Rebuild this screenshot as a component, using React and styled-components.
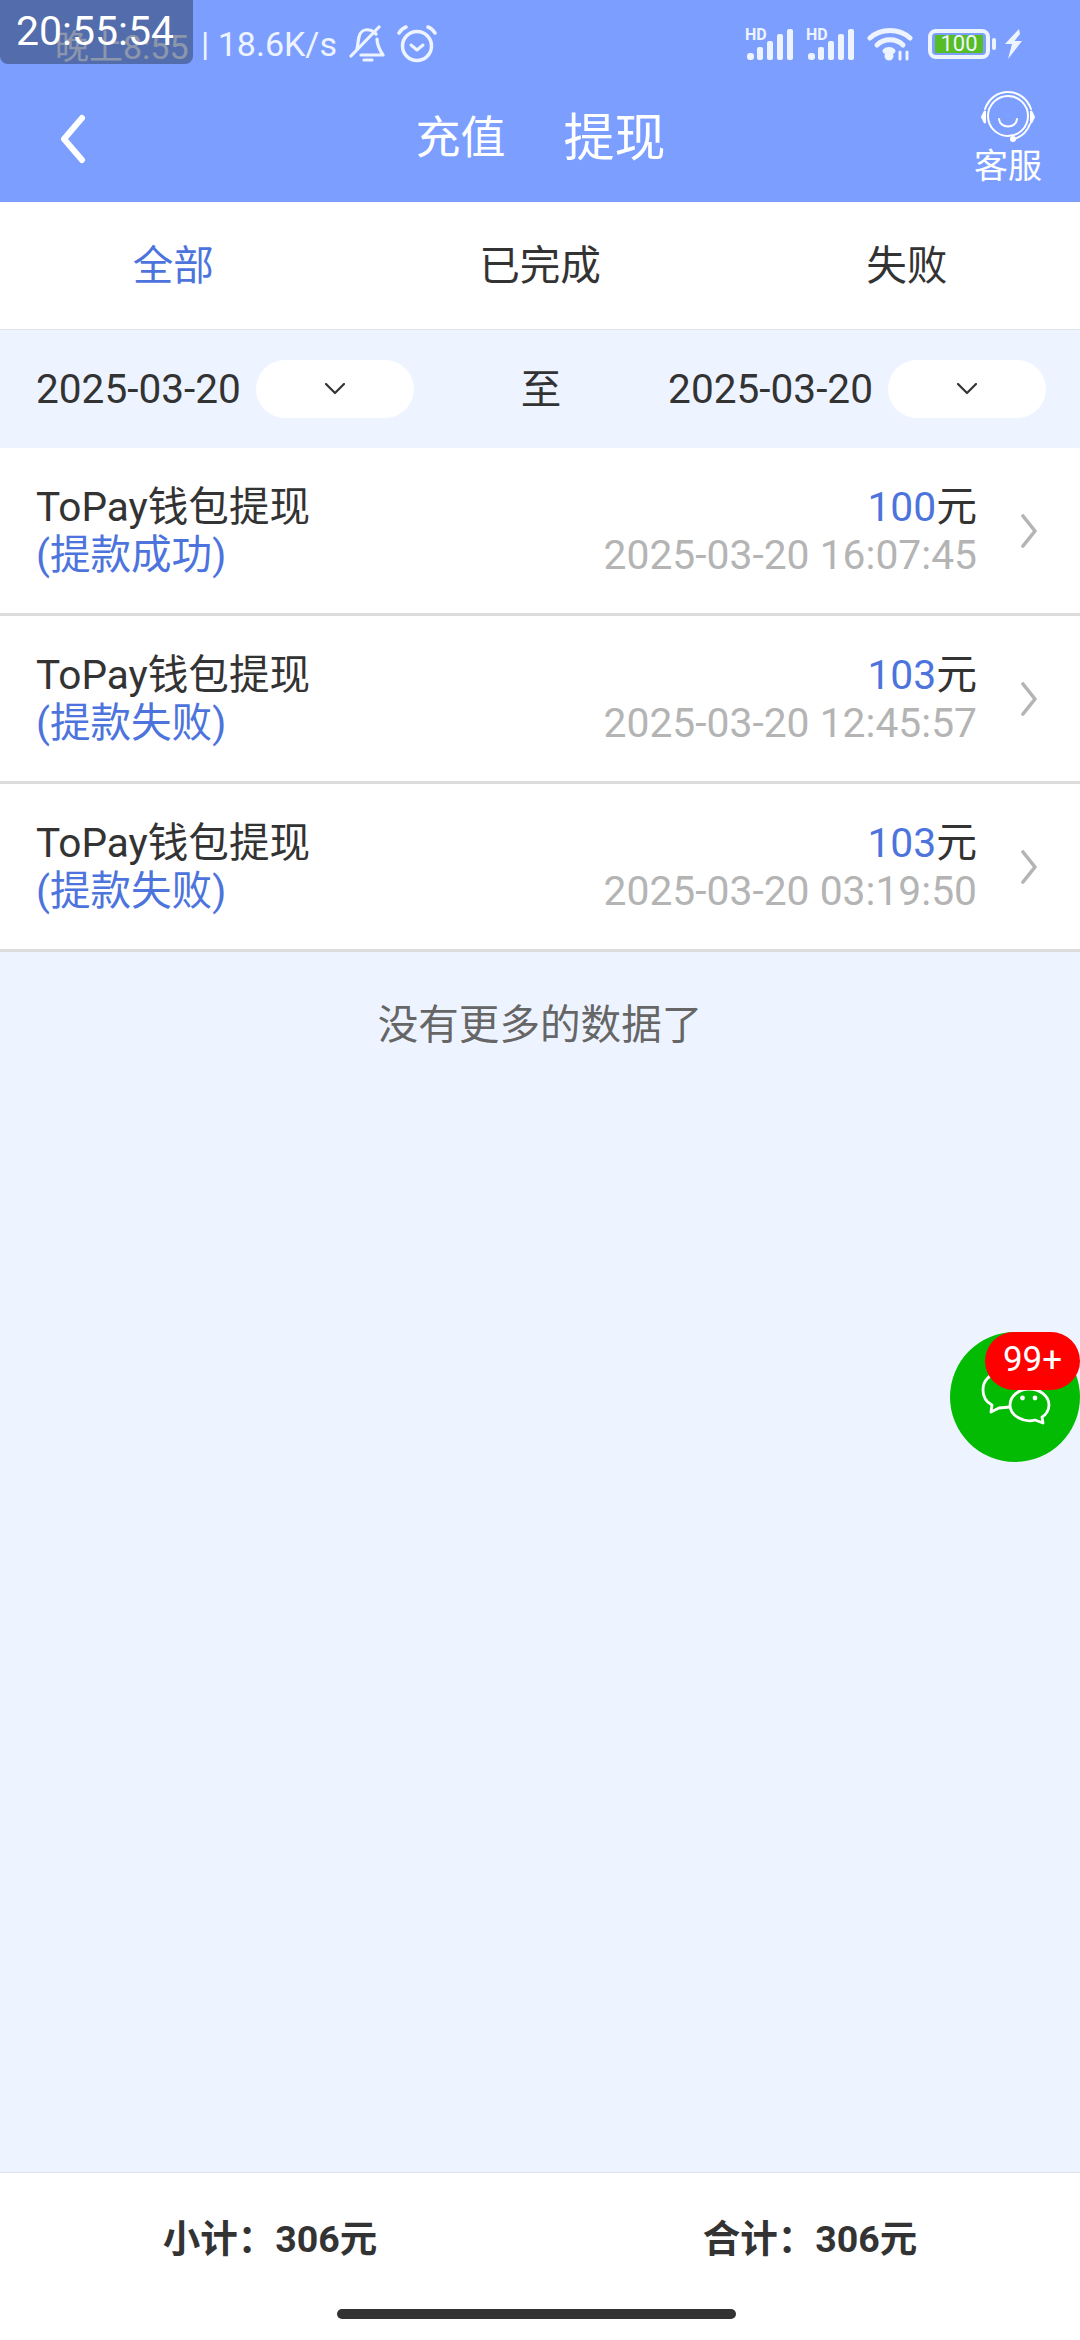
import React from "react";
import styled, { createGlobalStyle } from "styled-components";

const records = [
	{ amount: 100, status: "(提款成功)", time: "2025-03-20 16:07:45" },
	{ amount: 103, status: "(提款失败)", time: "2025-03-20 12:45:57" },
	{ amount: 103, status: "(提款失败)", time: "2025-03-20 03:19:50" },
];

const HdSignal = () => (
	<svg width="50" height="32" viewBox="0 0 50 32" fill="#eef4ff" overflow="visible">
		<text x="0" y="12" fontFamily="Roboto, sans-serif" fontWeight="700" fontSize="16">HD</text>
		<rect x="2" y="25" width="7" height="7" rx="3" />
		<rect x="12" y="19" width="6" height="13" rx="2" />
		<rect x="22" y="13" width="6" height="19" rx="2" />
		<rect x="32" y="6" width="6" height="26" rx="2" />
		<rect x="42" y="1" width="6" height="31" rx="2" />
	</svg>
);

const Wifi = () => (
	<svg width="46" height="34" viewBox="0 0 46 34" fill="none" stroke="#eef4ff" strokeWidth="5" strokeLinecap="round">
		<path d="M3 11C14 1 32 1 43 11" />
		<path d="M10 18C17 11 29 11 36 18" />
		<path d="M18 24C20 22 24 22 26 24" />
		<circle cx="22" cy="29" r="2" fill="#eef4ff" />
		<path d="M33 25V32M40 25V32" strokeWidth="3" />
	</svg>
);

const Bolt = () => (
	<svg width="17" height="30" viewBox="0 0 17 30" fill="#eef4ff">
		<path d="M14 0L0 15H7L3 30L17 12H9.500L15 5Z" />
	</svg>
);

const BellOff = () => (
	<svg width="36" height="38" viewBox="0 0 36 38" fill="none" stroke="#eef4ff" strokeWidth="3.2" strokeLinecap="round" strokeLinejoin="round">
		<path d="M8 24C9 20 9 16 10 12C11 7 15 4 20 5C23 5 25 7 27 9" />
		<path d="M28 14C28 19 30 24 34 30H12" />
		<path d="M2 31L30 2" />
		<path d="M15 35H23" />
	</svg>
);

const Alarm = () => (
	<svg width="40" height="38" viewBox="0 0 40 38" fill="none" stroke="#eef4ff" strokeWidth="3.5" strokeLinecap="round" strokeLinejoin="round">
		<circle cx="20" cy="21" r="14.5" />
		<path d="M14 20L20 25L26 20" strokeWidth="3" />
		<path d="M2 8C4 5 6 3 9 2M38 8C36 5 34 3 31 2" />
	</svg>
);

const Headset = () => (
	<svg width="56" height="52" viewBox="0 0 56 52" fill="none" stroke="#fff" strokeWidth="2" strokeLinecap="round">
		<circle cx="28" cy="25" r="20" />
		<path d="M5 18C9 7 18 1 28 1C38 1 47 7 51 18" />
		<path d="M5 20L2 26L5 32Z" fill="#fff" />
		<path d="M51 20L54 26L51 32Z" fill="#fff" />
		<path d="M19 28C20 38 36 38 37 28" />
		<path d="M50 33C47 41 41 46 34 48" />
		<circle cx="33" cy="48" r="2" fill="#fff" />
	</svg>
);

const BackArrow = () => (
	<svg width="26" height="50" viewBox="0 0 26 50" fill="none" stroke="#fff" strokeWidth="6" strokeLinecap="round" strokeLinejoin="round">
		<path d="M22 4L4 25L22 46" />
	</svg>
);

const SmallCaret = () => (
	<svg width="20" height="12" viewBox="0 0 20 12" fill="none" stroke="#333" strokeWidth="2.2" strokeLinecap="round" strokeLinejoin="round">
		<path d="M1 1L10 10L19 1" />
	</svg>
);

const RowArrow = () => (
	<svg width="16" height="34" viewBox="0 0 16 34" fill="none" stroke="#b4b4b4" strokeWidth="3.6" strokeLinecap="round" strokeLinejoin="round">
		<path d="M2 2L14 17L2 32" />
	</svg>
);

const WeChat = () => (
	<svg width="130" height="130" viewBox="0 0 130 130" fill="none" stroke="#fff" strokeWidth="2.8" strokeLinejoin="round">
		<path d="M60 75L49 76L41 80L42 73C36 70 33 64 33 58C33 48 40 42 48 42" />
		<path d="M79 57C90 57 99 64 99 73C99 78 96 83 92 85L93 91L85 88C74 91 60 84 60 73C60 64 69 57 79 57Z" />
		<circle cx="72.500" cy="66" r="2.400" fill="#fff" stroke="none" />
		<circle cx="85" cy="66" r="2.400" fill="#fff" stroke="none" />
	</svg>
);

export default function App() {
	return (
		<>
			<GlobalStyle />
			<Page>
				<Header>
					<StatusBar>
						<StatusGroup>
							<Clock>晚上8:55</Clock>
							<Speed>| 18.6K/s</Speed>
							<BellOff />
							<Alarm />
						</StatusGroup>
						<StatusIcons>
							<HdSignal />
							<HdSignal />
							<Wifi />
							<Battery>
								<BatteryLevel>100</BatteryLevel>
							</Battery>
							<Bolt />
						</StatusIcons>
					</StatusBar>
					<NavBar>
						<BackButton>
							<BackArrow />
						</BackButton>
						<NavTitles>
							<NavTitle>充值</NavTitle>
							<NavTitle $active>提现</NavTitle>
						</NavTitles>
						<ServiceButton>
							<Headset />
							<ServiceLabel>客服</ServiceLabel>
						</ServiceButton>
					</NavBar>
				</Header>
				<Tabs>
					<Tab $active>全部</Tab>
					<Tab>已完成</Tab>
					<Tab>失败</Tab>
				</Tabs>
				<Filter>
					<DateGroup>
						<span>2025-03-20</span>
						<DateSelect>
							<SmallCaret />
						</DateSelect>
					</DateGroup>
					<RangeLabel>至</RangeLabel>
					<DateGroup>
						<span>2025-03-20</span>
						<DateSelect>
							<SmallCaret />
						</DateSelect>
					</DateGroup>
				</Filter>
				<Main>
					{records.map((record) => (
						<Row key={record.time}>
							<RowLeft>
								<RowTitle>ToPay钱包提现</RowTitle>
								<RowStatus>{record.status}</RowStatus>
							</RowLeft>
							<RowRight>
								<RowAmount>
									<em>{record.amount}</em>元
								</RowAmount>
								<RowTime>{record.time}</RowTime>
							</RowRight>
							<RowArrow />
						</Row>
					))}
					<EndNote>没有更多的数据了</EndNote>
				</Main>
				<Footer>
					<Totals>
						<Total>小计：306元</Total>
						<Total>合计：306元</Total>
					</Totals>
					<HomeBar />
				</Footer>
				<Timer>20:55:54</Timer>
				<ChatBubble>
					<WeChat />
					<ChatBadge>99+</ChatBadge>
				</ChatBubble>
			</Page>
		</>
	);
}

const GlobalStyle = createGlobalStyle`
	html, body {
		margin: 0;
		padding: 0;
	}
	body {
		font-family: Roboto, "Noto Sans CJK SC", sans-serif;
		color: #333;
	}
`;

const Page = styled.div`
	position: relative;
	display: flex;
	flex-direction: column;
	width: 1080px;
	height: 2340px;
	overflow: hidden;
	background-color: #eef4ff;
`;

const Header = styled.header`
	height: 202px;
	background-color: #7c9fff;
	color: #fff;
`;

const StatusBar = styled.div`
	display: flex;
	align-items: center;
	justify-content: space-between;
	height: 88px;
	padding: 0 58px 0 55px;
`;

const StatusGroup = styled.div`
	display: flex;
	align-items: center;
	gap: 12px;
	font-size: 34px;
	color: #eef4ff;
`;

const Clock = styled.span`
	width: 134px;
	white-space: nowrap;
`;

const Speed = styled.span`
	white-space: nowrap;
`;

const StatusIcons = styled.div`
	display: flex;
	align-items: center;
	gap: 11px;
`;

const Battery = styled.div`
	position: relative;
	box-sizing: border-box;
	width: 62px;
	height: 30px;
	margin: 0 4px;
	padding: 2px 3px;
	border: 4px solid #eef4ff;
	border-radius: 8px;

	&::after {
		content: "";
		position: absolute;
		top: 5px;
		right: -10px;
		width: 4px;
		height: 12px;
		border-radius: 2px;
		background-color: #eef4ff;
	}
`;

const BatteryLevel = styled.div`
	height: 100%;
	background-color: #56bd26;
	color: #eef4ff;
	font-size: 22px;
	line-height: 18px;
	text-align: center;
`;

const NavBar = styled.div`
	display: flex;
	align-items: center;
	justify-content: space-between;
	height: 114px;
	padding: 0 38px 0 60px;
`;

const BackButton = styled.div`
	display: flex;
	width: 26px;
	margin-top: -12px;
`;

const NavTitles = styled.div`
	display: flex;
	align-items: center;
	gap: 58px;
	margin: -22px 0 0 21px;
`;

const NavTitle = styled.span`
	font-size: ${(props) => (props.$active ? "51px" : "45px")};
`;

const ServiceButton = styled.div`
	display: flex;
	flex-direction: column;
	align-items: center;
	margin-top: -12px;
`;

const ServiceLabel = styled.span`
	margin-top: 1px;
	font-size: 34px;
	line-height: 44px;
`;

const Tabs = styled.nav`
	display: flex;
	align-items: center;
	justify-content: space-around;
	box-sizing: border-box;
	height: 128px;
	padding-bottom: 7px;
	border-bottom: 1px solid #dfe3ea;
	background-color: #fff;
`;

const Tab = styled.span`
	font-size: 40.6px;
	color: ${(props) => (props.$active ? "#4d74dc" : "#333")};
`;

const Filter = styled.div`
	display: flex;
	align-items: center;
	justify-content: space-between;
	height: 118px;
	padding: 0 34px 0 36px;
	font-size: 40.6px;
`;

const DateGroup = styled.div`
	display: flex;
	align-items: center;
	gap: 15px;
`;

const RangeLabel = styled.span`
	margin-top: -5px;
`;

const DateSelect = styled.div`
	display: flex;
	align-items: center;
	justify-content: center;
	width: 158px;
	height: 58px;
	border-radius: 29px;
	background-color: #fff;
`;

const Main = styled.main`
	flex: 1;
`;

const Row = styled.div`
	display: flex;
	align-items: center;
	box-sizing: border-box;
	height: 168px;
	padding: 0 43px 0 36px;
	border-bottom: 3px solid #dcdcdc;
	background-color: #fff;

	svg {
		margin-left: 44px;
	}
`;

const RowLeft = styled.div`
	flex: 1;
	font-size: 40.6px;
	line-height: 48px;
`;

const RowTitle = styled.div``;

const RowStatus = styled.div`
	color: #4d74dc;
`;

const RowRight = styled.div`
	font-size: 40.8px;
	line-height: 48px;
	text-align: right;
`;

const RowAmount = styled.div`
	em {
		font-style: normal;
		color: #4d74dc;
	}
`;

const RowTime = styled.div`
	color: #b4b4b4;
`;

const EndNote = styled.div`
	padding-top: 49px;
	font-size: 40.6px;
	line-height: 48px;
	text-align: center;
	color: #666;
`;

const Footer = styled.footer`
	box-sizing: border-box;
	height: 168px;
	border-top: 1px solid #dfe3ea;
	background-color: #fff;
`;

const Totals = styled.div`
	display: grid;
	grid-template-columns: 1fr 1fr;
	align-items: center;
	height: 125px;
`;

const Total = styled.span`
	font-size: 37.5px;
	font-weight: 700;
	text-align: center;
`;

const HomeBar = styled.div`
	width: 399px;
	height: 10px;
	margin: 11px 0 0 337px;
	border-radius: 5px;
	background-color: #333;
`;

const Timer = styled.div`
	position: absolute;
	top: 0;
	left: 0;
	box-sizing: border-box;
	width: 193px;
	height: 64px;
	padding-left: 16px;
	border-radius: 0 0 8px 8px;
	background-color: rgba(42, 57, 87, 0.5);
	color: #fff;
	font-size: 41px;
	line-height: 62px;
`;

const ChatBubble = styled.div`
	position: absolute;
	top: 1332px;
	left: 950px;
	width: 130px;
	height: 130px;
	border-radius: 50%;
	background-color: #04bb04;
`;

const ChatBadge = styled.div`
	position: absolute;
	top: 0;
	right: 0;
	width: 95px;
	height: 58px;
	border-radius: 29px;
	background-color: #f00;
	color: #fff;
	font-size: 35px;
	line-height: 56px;
	text-align: center;
`;
